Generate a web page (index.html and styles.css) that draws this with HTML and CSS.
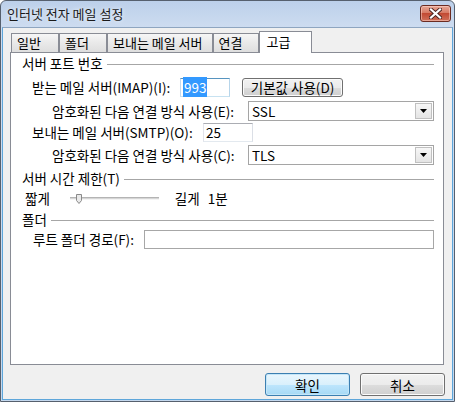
FILE: index.html
```html
<!DOCTYPE html>
<html>
<head>
  <meta charset="utf-8">
  <title>인터넷 전자 메일 설정</title>
  <link rel="stylesheet" href="styles.css">
</head>
<body>
  <div class="window">
    <div class="titlebar">
      <span class="title">인터넷 전자 메일 설정</span>
      <div class="close">
        <svg width="13" height="11" viewBox="0 0 13 11">
          <path d="M2 1.5 L11 9.5 M11 1.5 L2 9.5" stroke="#4a2320" stroke-width="4" stroke-linecap="square"/>
          <path d="M2 1.5 L11 9.5 M11 1.5 L2 9.5" stroke="#ffffff" stroke-width="2.2" stroke-linecap="square"/>
        </svg>
      </div>
    </div>

    <div class="client">
      <div class="tabs">
        <div class="tab">일반</div>
        <div class="tab">폴더</div>
        <div class="tab">보내는 메일 서버</div>
        <div class="tab tab-short">연결</div>
        <div class="tab tab-active">고급</div>
      </div>

      <div class="panel">
        <div class="group-head"><span>서버 포트 번호</span><div class="rule"></div></div>

        <div class="row row-imap">
          <span class="label label-imap">받는 메일 서버(IMAP)(I):</span>
          <div class="textbox textbox-port textbox-focus"><span class="selected">993</span></div>
          <div class="button button-default">기본값 사용(D)</div>
        </div>

        <div class="row row-enc1">
          <span class="label label-enc">암호화된 다음 연결 방식 사용(E):</span>
          <div class="combo">
            <span class="combo-text">SSL</span>
            <div class="combo-arrow">
              <svg width="7" height="4" viewBox="0 0 7 4"><path d="M0 0 H7 L3.5 4 Z" fill="#000"/></svg>
            </div>
          </div>
        </div>

        <div class="row row-smtp">
          <span class="label label-smtp">보내는 메일 서버(SMTP)(O):</span>
          <div class="textbox textbox-port">25</div>
        </div>

        <div class="row row-enc2">
          <span class="label label-enc">암호화된 다음 연결 방식 사용(C):</span>
          <div class="combo">
            <span class="combo-text">TLS</span>
            <div class="combo-arrow">
              <svg width="7" height="4" viewBox="0 0 7 4"><path d="M0 0 H7 L3.5 4 Z" fill="#000"/></svg>
            </div>
          </div>
        </div>

        <div class="group-head group-timeout"><span>서버 시간 제한(T)</span><div class="rule"></div></div>

        <div class="row row-slider">
          <span class="short">짧게</span>
          <svg class="slider" width="89" height="12" viewBox="0 0 89 12">
            <rect x="0" y="4" width="89" height="2" fill="#d6d6d6"/>
            <rect x="0" y="4" width="89" height="1" fill="#b4b4b4"/>
            <rect x="0" y="6" width="89" height="1" fill="#f4f4f4"/>
            <path d="M6.5 1.5 H11.5 V7.5 L9 10.5 L6.5 7.5 Z" fill="#e9e9e9" stroke="#8a8a8a"/>
          </svg>
          <span class="long">길게</span>
          <span class="value">1분</span>
        </div>

        <div class="group-head group-folder"><span>폴더</span><div class="rule"></div></div>

        <div class="row row-root">
          <span class="label label-root">루트 폴더 경로(F):</span>
          <div class="textbox textbox-wide"></div>
        </div>
      </div>

      <div class="actions">
        <div class="button button-focus">확인</div>
        <div class="button">취소</div>
      </div>
    </div>
  </div>
</body>
</html>
```

FILE: styles.css
```css
html, body {
  margin: 0;
  padding: 0;
}

body {
  font-family: "Noto Sans CJK KR", "Noto Sans", sans-serif;
  font-size: 13.5px;
  color: #000;
  background: #fff;
}

.window {
  width: 455px;
  height: 402px;
  box-sizing: border-box;
  display: flex;
  flex-direction: column;
  border: 1px solid #56606e;
  border-radius: 6px 6px 0 0;
  background: linear-gradient(#bcd0ea, #cddcf0 26px, #c4d8ee);
}

/* title bar */
.titlebar {
  height: 26px;
  display: flex;
  justify-content: space-between;
  padding: 0 3px 0 6px;
}

.title {
  margin-top: 5px;
  font-size: 13px;
  line-height: 15px;
  color: #1a1a1a;
  text-shadow: 0 0 4px rgba(255, 255, 255, 0.9);
}

.close {
  width: 31px;
  height: 17px;
  margin-top: 4px;
  box-sizing: border-box;
  display: flex;
  align-items: center;
  justify-content: center;
  border: 1px solid #6b2b22;
  border-radius: 3px;
  background: linear-gradient(#e7a796, #d77b65 45%, #c24a33 50%, #d0705a);
  box-shadow: inset 0 0 0 1px rgba(255, 220, 210, 0.5);
}

/* client area */
.client {
  flex: 1;
  margin: 0 1px 1px 1px;
  padding: 3px 7px 0 7px;
  display: flex;
  flex-direction: column;
  border: 1px solid #5ea6da;
  border-top-color: #8ea5c0;
  background: #f0f0f0;
}

.tabs {
  height: 21px;
  display: flex;
  align-items: flex-end;
  padding-left: 1px;
}

.tab {
  height: 19px;
  min-width: 48px;
  box-sizing: border-box;
  padding: 0 9px 0 5px;
  font-size: 13px;
  line-height: 17px;
  border: 1px solid #898c95;
  border-bottom: none;
  background: linear-gradient(#f6f6f6, #e9e9e9 50%, #dedede);
}

.tab-short {
  min-width: 46px;
}

.tab-active {
  position: relative;
  z-index: 1;
  height: 22px;
  margin-bottom: -1px;
  min-width: 53px;
  padding: 0 9px 0 7px;
  line-height: 19px;
  background: #fff;
}

.panel {
  width: 434px;
  height: 313px;
  box-sizing: border-box;
  padding: 3px 9px 0 11px;
  border: 1px solid #898c95;
  background: #fff;
}

/* group headers */
.group-head {
  height: 15px;
  display: flex;
  align-items: center;
  gap: 4px;
  line-height: 15px;
  white-space: nowrap;
}

.rule {
  flex: 1;
  height: 1px;
  margin-top: 1px;
  background: #a6a6a6;
}

.group-timeout,
.group-folder {
  margin-top: 6px;
}

/* rows */
.row {
  display: flex;
  align-items: center;
  line-height: 15px;
  white-space: nowrap;
}

.row-imap { height: 20px; margin-top: 6px; }
.row-enc1 { height: 20px; margin-top: 4px; }
.row-smtp { height: 19px; margin-top: 2px; }
.row-enc2 { height: 20px; margin-top: 3px; }
.row-slider { height: 15px; margin-top: 5px; }
.row-root { height: 19px; margin-top: 3px; }

.label { flex-shrink: 0; }
.label-imap { margin-left: 10px; width: 148px; }
.label-smtp { margin-left: 10px; width: 171px; }
.label-enc { margin-left: 30px; width: 196px; }
.label-root { margin-left: 11px; width: 111px; }

.textbox {
  height: 19px;
  box-sizing: border-box;
  padding: 0 2px;
  line-height: 17px;
  border: 1px solid;
  border-color: #abadb3 #dbdfe6 #e3e9ef #e2e3ea;
  background: #fff;
}

.textbox-port {
  width: 50px;
  flex-shrink: 0;
}

.textbox-wide {
  flex: 1;
  border-color: #a7a7a7;
}

.textbox-focus {
  border-color: #5794bf #b7d5ea #c7e2f1 #c5daed;
}

.selected {
  padding: 0 1px;
  background: #3399ff;
  color: #fff;
}

.combo {
  flex: 1;
  height: 20px;
  box-sizing: border-box;
  display: flex;
  align-items: center;
  border: 1px solid #a5a5a5;
  background: #fff;
}

.combo-text {
  flex: 1;
  padding-left: 3px;
}

.combo-arrow {
  width: 17px;
  height: 16px;
  margin-right: 1px;
  box-sizing: border-box;
  display: flex;
  align-items: center;
  justify-content: center;
  border: 1px solid #c0c0c0;
  background: linear-gradient(#f7f7f7, #e4e4e4);
}

/* slider */
.short {
  margin-left: 3px;
}

.slider {
  margin-left: 20px;
}

.long {
  margin-left: 16px;
}

.value {
  margin-left: 8px;
}

/* buttons */
.button {
  height: 19px;
  box-sizing: border-box;
  display: flex;
  align-items: center;
  justify-content: center;
  border: 1px solid #707070;
  border-radius: 3px;
  background: linear-gradient(#f2f2f2, #ebebeb 50%, #dddddd 50%, #cfcfcf);
  box-shadow: inset 0 0 0 1px #fbfbfb;
}

.button-default {
  width: 101px;
  margin-left: 12px;
  flex-shrink: 0;
}

.actions {
  display: flex;
  justify-content: flex-end;
  gap: 10px;
  margin-top: 8px;
}

.actions .button {
  width: 85px;
  height: 23px;
}

.button-focus {
  border-color: #3c7fb1;
  background: linear-gradient(#eaf6fd, #d9f0fc 50%, #bee6fd 50%, #a7d9f5);
  box-shadow: inset 0 0 0 1px #c5e6f8;
}
```
